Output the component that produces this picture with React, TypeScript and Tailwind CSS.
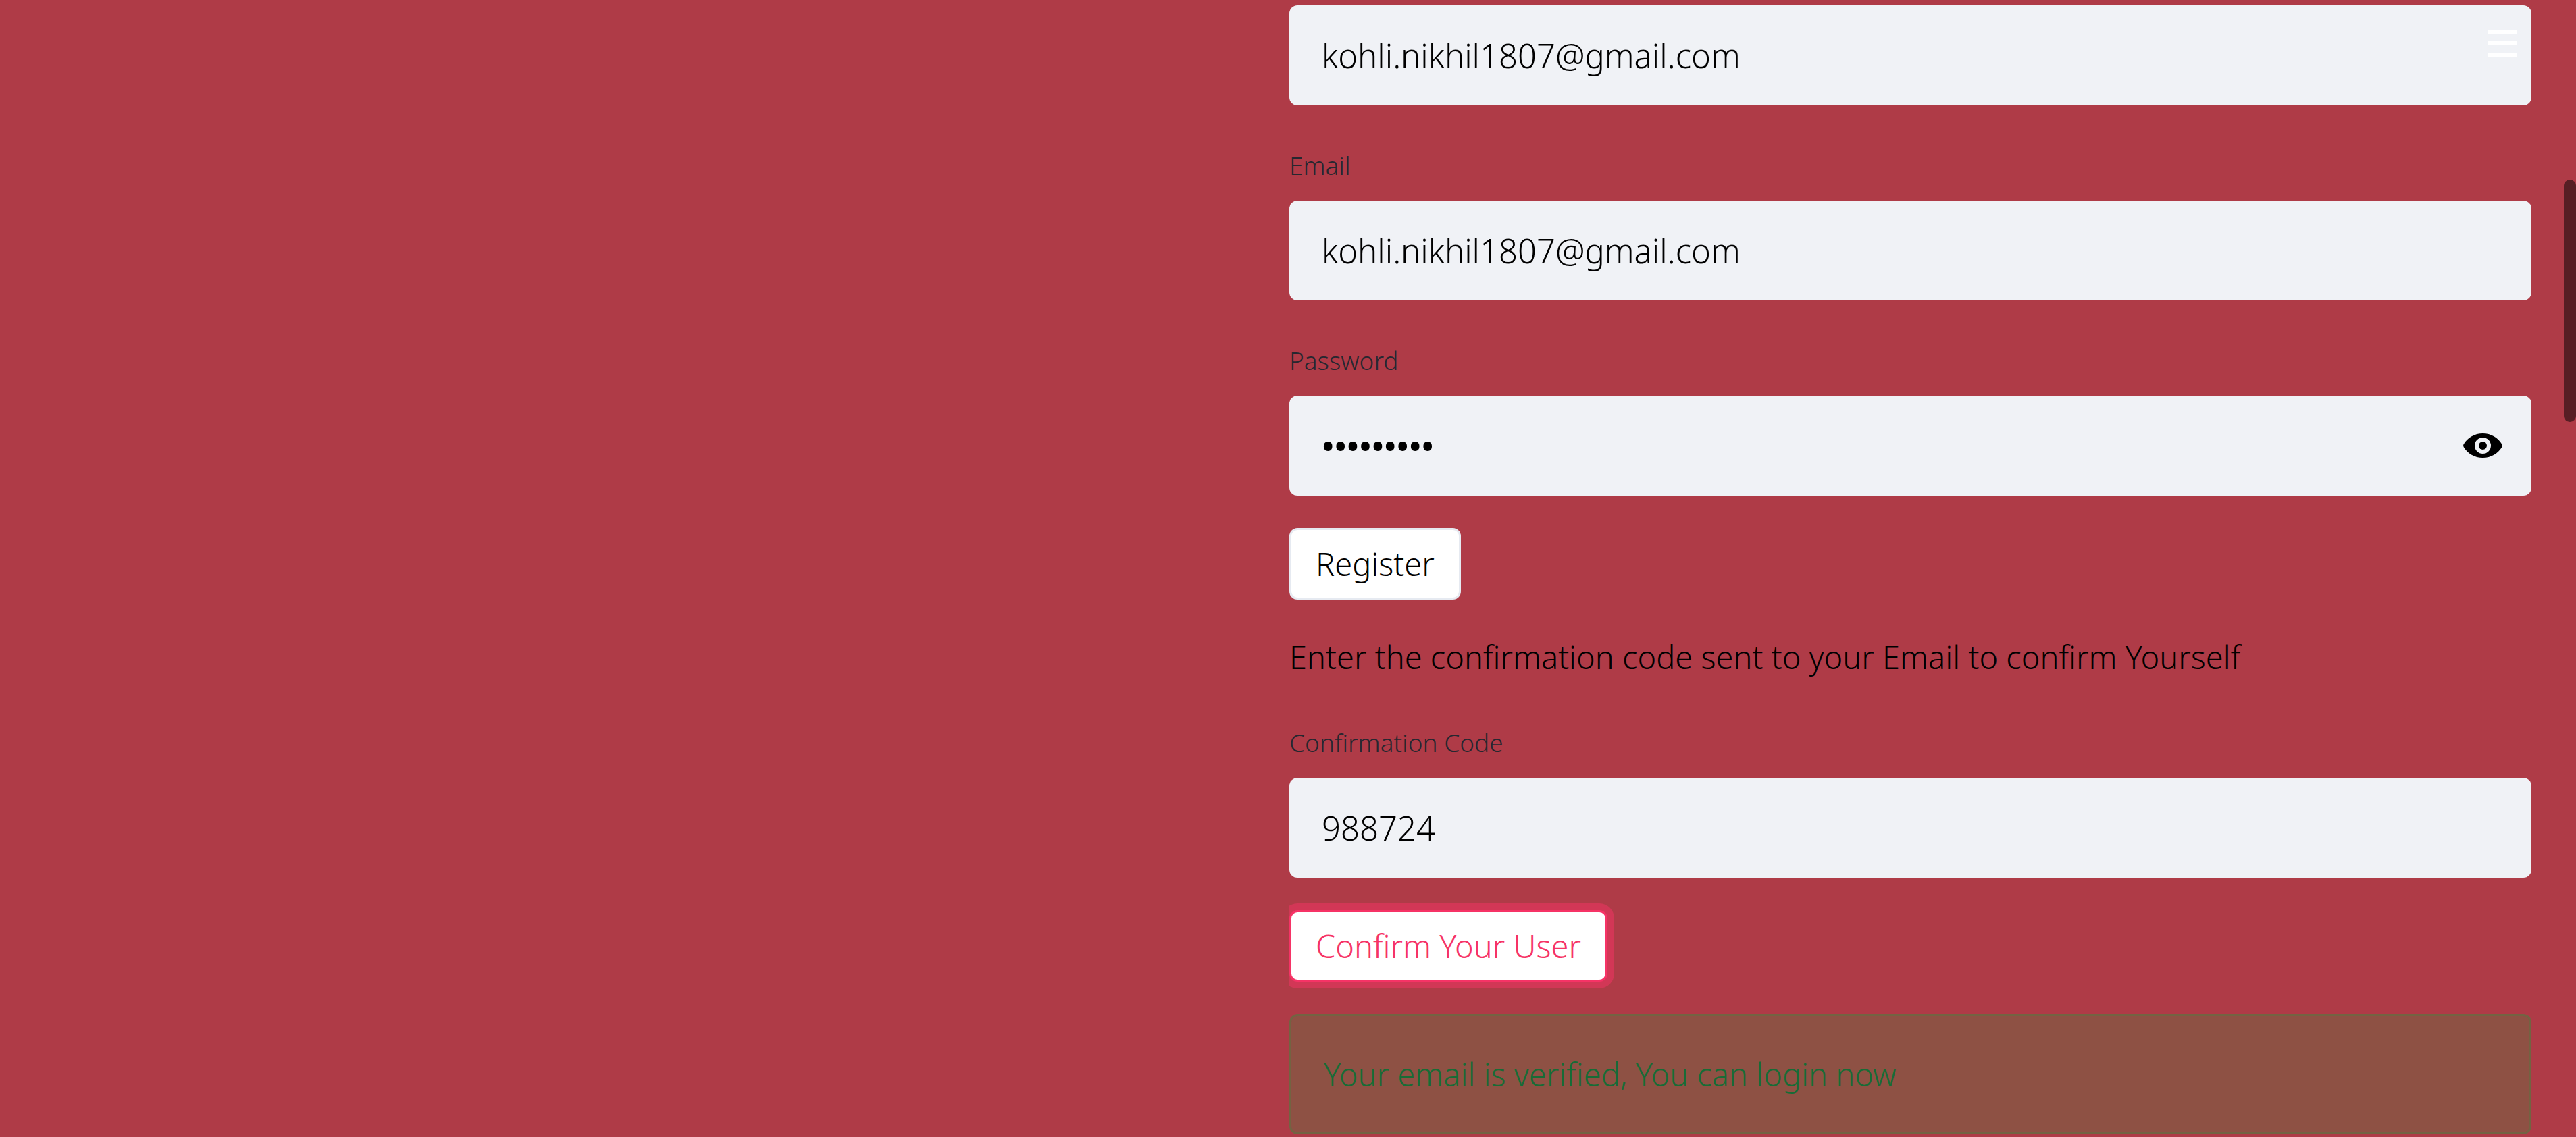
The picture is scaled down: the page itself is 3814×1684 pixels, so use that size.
import { useState } from 'react';
import type { ReactNode } from 'react';

const inputClass =
  'block w-full h-[148px] rounded-xl bg-[#f0f2f6] px-12 text-[49px] text-black outline-none';

const buttonClass =
  'h-[106px] self-start rounded-xl border-3 bg-white px-9 text-[47px] font-light';

type FieldProps = {
  id: string;
  label: string;
  type?: string;
  value: string;
  onChange: (value: string) => void;
  hideLabel?: boolean;
  children?: ReactNode;
};

function Field({ id, label, type = 'text', value, onChange, hideLabel = false, children }: FieldProps) {
  return (
    <div>
      {hideLabel ? null : (
        <label htmlFor={id} className="mb-3 block text-[37px] leading-[81px] font-light text-[#262730]">
          {label}
        </label>
      )}
      <div className="relative">
        <input
          id={id}
          type={type}
          value={value}
          aria-label={hideLabel ? label : undefined}
          onChange={(e) => onChange(e.target.value)}
          className={type === 'password' ? `${inputClass} font-semibold` : `${inputClass} font-light`}
        />
        {children}
      </div>
    </div>
  );
}

function EyeIcon() {
  return (
    <svg viewBox="0 0 58 36" className="h-9 w-[58px]" fill="currentColor" aria-hidden="true">
      <path
        fillRule="evenodd"
        d="M29 0C41 0 51.500 6.200 57.200 15.800Q58.600 18 57.200 20.200C51.500 29.800 41 36 29 36S6.500 29.800 .8 20.200Q-.6 18 .8 15.800C6.500 6.200 17 0 29 0ZM29 6a12 12 0 1 0 0 24a12 12 0 1 0 0-24Z"
      />
      <circle cx="29" cy="18" r="6" />
    </svg>
  );
}

export default function App() {
  const [username, setUsername] = useState('kohli.nikhil1807@gmail.com');
  const [email, setEmail] = useState('kohli.nikhil1807@gmail.com');
  const [password, setPassword] = useState('secret123');
  const [code, setCode] = useState('988724');
  const [visible, setVisible] = useState(false);

  return (
    <div className="relative min-h-screen bg-[#af3b47] font-['Noto_Sans',sans-serif] text-black">
      <main className="grid grid-cols-2 gap-1 px-[66px] pt-2">
        <form
          className="col-start-2 flex flex-col gap-12 overflow-x-clip"
          onSubmit={(e) => e.preventDefault()}
        >
          <Field id="username" label="Username" hideLabel value={username} onChange={setUsername} />
          <Field id="email" label="Email" value={email} onChange={setEmail} />
          <Field
            id="password"
            label="Password"
            type={visible ? 'text' : 'password'}
            value={password}
            onChange={setPassword}
          >
            <button
              type="button"
              aria-label="Show password"
              onClick={() => setVisible(!visible)}
              className="absolute inset-y-0 right-0 flex items-center px-[43px]"
            >
              <EyeIcon />
            </button>
          </Field>
          <button type="button" className={`${buttonClass} border-[#e6eaf1]`}>
            Register
          </button>
          <p className="text-[47px] leading-[75px] font-light">
            Enter the confirmation code sent to your Email to confirm Yourself
          </p>
          <Field id="code" label="Confirmation Code" value={code} onChange={setCode} />
          <button
            type="submit"
            className={`${buttonClass} border-[#f63366] text-[#f63366] shadow-[0_0_0_10px_#f6336680]`}
          >
            Confirm Your User
          </button>
          <div
            role="alert"
            className="flex h-[178px] items-center rounded-xl border-3 border-[#09ab3b33] bg-[#09ab3b33] px-12 text-[47px] font-light text-[#176c36]"
          >
            Your email is verified, You can login now
          </div>
        </form>
      </main>

      <button
        type="button"
        aria-label="Open menu"
        className="absolute top-11 right-[87px] flex w-[43px] flex-col gap-[11px]"
      >
        <span className="h-[6px] w-full bg-white" />
        <span className="h-[6px] w-full bg-white" />
        <span className="h-[6px] w-full bg-white" />
      </button>
      <div className="absolute top-[266px] right-0 h-[359px] w-[18px] rounded-full bg-[#571e24]" />
    </div>
  );
}
